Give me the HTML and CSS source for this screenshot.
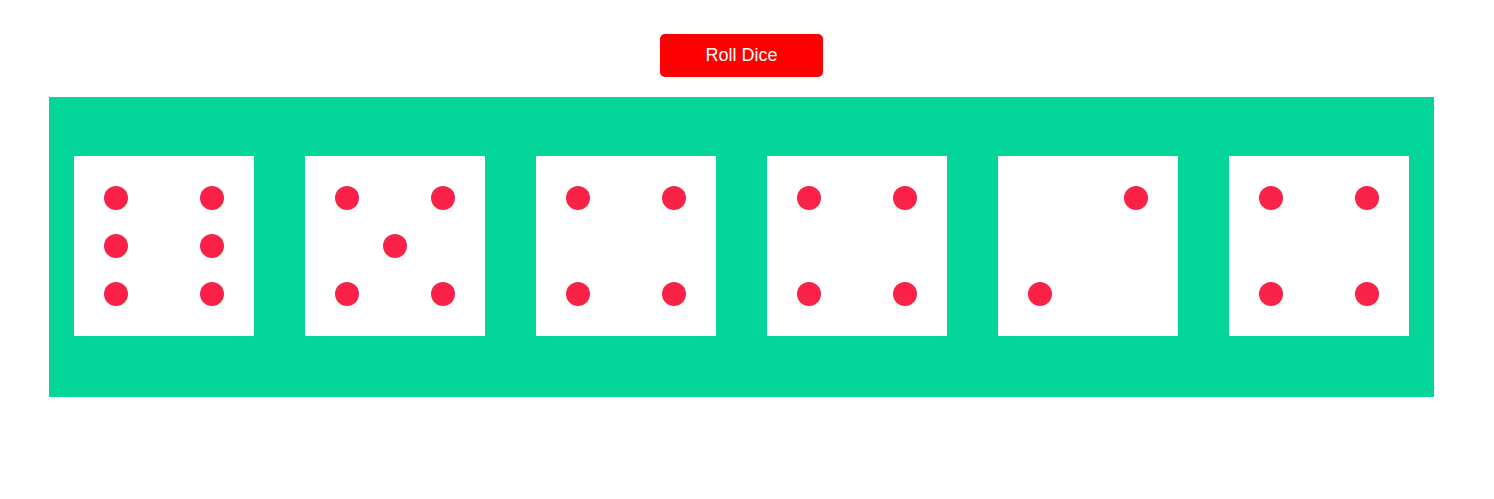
FILE: index.html
```html
<!DOCTYPE html>
<html>
<head>
<meta charset="utf-8">
<link rel="stylesheet" href="styles.css">
</head>
<body>
<div class="page">
  <button class="roll">Roll Dice</button>
  <div class="board">
    <div class="die">
      <span class="dot c1 r1"></span><span class="dot c3 r1"></span>
      <span class="dot c1 r2"></span><span class="dot c3 r2"></span>
      <span class="dot c1 r3"></span><span class="dot c3 r3"></span>
    </div>
    <div class="die">
      <span class="dot c1 r1"></span><span class="dot c3 r1"></span>
      <span class="dot c2 r2"></span>
      <span class="dot c1 r3"></span><span class="dot c3 r3"></span>
    </div>
    <div class="die">
      <span class="dot c1 r1"></span><span class="dot c3 r1"></span>
      <span class="dot c1 r3"></span><span class="dot c3 r3"></span>
    </div>
    <div class="die">
      <span class="dot c1 r1"></span><span class="dot c3 r1"></span>
      <span class="dot c1 r3"></span><span class="dot c3 r3"></span>
    </div>
    <div class="die">
      <span class="dot c3 r1"></span>
      <span class="dot c1 r3"></span>
    </div>
    <div class="die">
      <span class="dot c1 r1"></span><span class="dot c3 r1"></span>
      <span class="dot c1 r3"></span><span class="dot c3 r3"></span>
    </div>
  </div>
</div>
</body>
</html>
```
FILE: styles.css
```css
html, body {
  margin: 0;
  padding: 0;
  background: #ffffff;
  font-family: "Liberation Sans", Arial, sans-serif;
}

.page {
  width: 1483px;
  display: flex;
  flex-direction: column;
  align-items: center;
  padding-top: 34px;
}

.roll {
  width: 163px;
  height: 43px;
  background: #ff0000;
  color: #ffffff;
  border: none;
  border-radius: 5px;
  font-family: "Liberation Sans", Arial, sans-serif;
  font-size: 18px;
  padding: 0;
  margin: 0 0 20px 0;
  cursor: pointer;
}

.board {
  width: 1385px;
  height: 300px;
  box-sizing: border-box;
  padding-top: 59px;
  background: #02d49a;
  display: flex;
  justify-content: space-around;
  align-items: flex-start;
}

.die {
  width: 180px;
  height: 180px;
  box-sizing: border-box;
  padding: 30px;
  background: #ffffff;
  display: grid;
  grid-template-columns: 24px 24px 24px;
  grid-template-rows: 24px 24px 24px;
  justify-content: space-between;
  align-content: space-between;
}

.dot {
  width: 24px;
  height: 24px;
  border-radius: 50%;
  background: #fa2246;
}

.c1 { grid-column: 1; }
.c2 { grid-column: 2; }
.c3 { grid-column: 3; }
.r1 { grid-row: 1; }
.r2 { grid-row: 2; }
.r3 { grid-row: 3; }
```
